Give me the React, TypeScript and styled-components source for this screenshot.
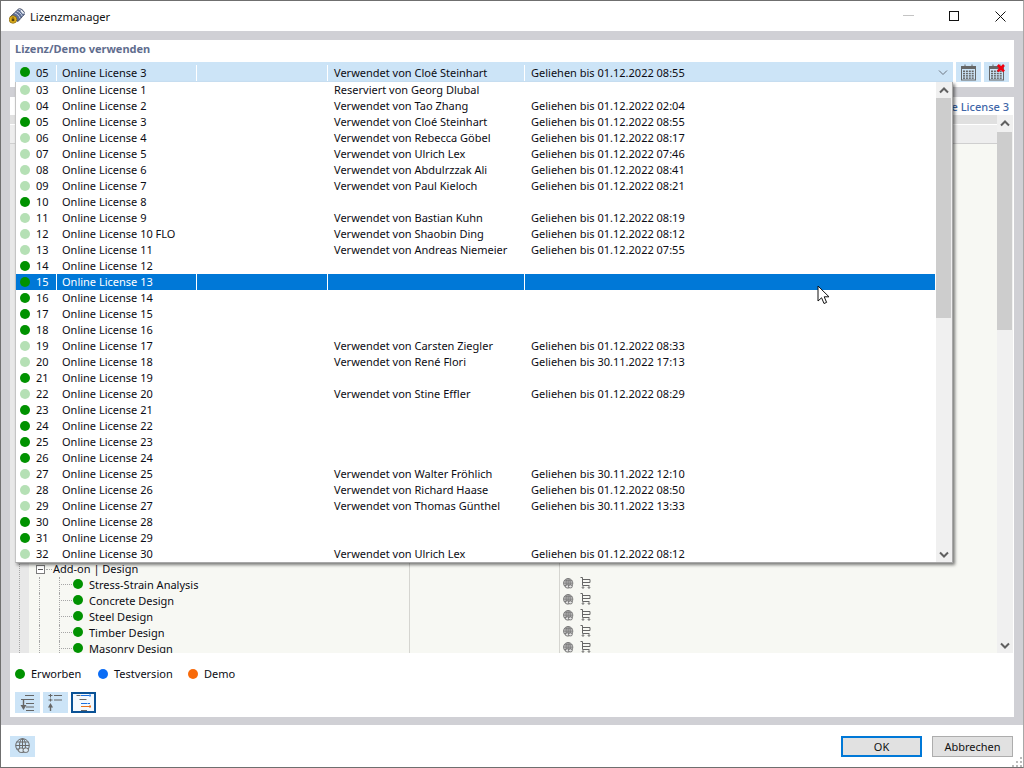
import React from "react";
import styled, { createGlobalStyle } from "styled-components";

const Global = createGlobalStyle`
  html, body { margin: 0; padding: 0; background: #fff; }
  body { font-family: "Noto Sans", "Open Sans", sans-serif; font-size: 11px; color: #0c0c14; }
  * { box-sizing: border-box; }
`;

const Window = styled.div`
  position: relative; width: 1024px; height: 768px; display: flex; flex-direction: column;
  border: 1px solid #6f6f6f; border-right-color: #a8a8a8; background: #fff; overflow: hidden;
`;
const TitleBar = styled.header`
  height: 30px; flex: none; display: flex; align-items: center; padding-left: 8px; font-size: 11.2px; color: #111;
`;
const LogoSlot = styled.div` width: 21px; flex: none; display: flex; align-items: center; `;
const TitleText = styled.span` flex: 1; `;
const WindowControl = styled.div`
  width: 46px; height: 30px; display: flex; align-items: center; justify-content: center;
`;
const Body = styled.main`
  flex: 1; min-height: 0; background: #d0d0d5; padding: 9px 9px 8px; display: flex; flex-direction: column; gap: 10px;
`;
const Panel = styled.section`
  background: #fff; flex: none; display: flex; flex-direction: column;
`;
const TopPanel = styled(Panel)` height: 47px; padding: 0 5px; z-index: 2; `;
const MainPanel = styled(Panel)` height: 620px; `;
const PanelTitle = styled.h2`
  margin: 0; height: 22px; padding-top: 2px; font-size: 11px; line-height: 14px; font-weight: 700; color: #5f6d8e;
`;
const ComboLine = styled.div` display: flex; gap: 3px; height: 20px; `;
const ComboWrap = styled.div` position: relative; width: 938px; flex: none; `;
const Combo = styled.div`
  height: 20px; background: #cce4f7; display: flex; padding: 3px 0 0 1px; align-items: flex-start;
`;
const ComboArrow = styled.div`
  flex: 1; height: 14px; display: flex; align-items: center; justify-content: center; padding-right: 2px;
`;
const ToolButton = styled.button<{ $active?: boolean }>`
  width: 25px; height: 21px; padding: 0; display: flex; align-items: center; justify-content: center;
  background: ${p => (p.$active ? "#f4f9fe" : "#cce4f7")};
  border: ${p => (p.$active ? "2px solid #0a5296" : "0")};
`;
const ComboButton = styled(ToolButton)` height: 20px; `;
const Popup = styled.div`
  position: absolute; left: 0; right: 0; top: 20px; height: 481px; background: #fff; display: flex;
  border-left: 1px solid #c4c4c4; border-right: 1px solid #a8a8a8; border-bottom: 1px solid #a8a8a8;
  box-shadow: 2px 2px 3px rgba(0, 0, 0, 0.5);
`;
const Rows = styled.div` width: 919px; margin-right: 1px; flex: none; `;
const Row = styled.div<{ $selected?: boolean }>`
  height: 16px; display: flex; align-items: center; white-space: nowrap; line-height: 16px;
  background: ${p => (p.$selected ? "#0078d7" : "transparent")};
  color: ${p => (p.$selected ? "#fff" : "#0c0c14")};
`;
const DotCell = styled.div` width: 20px; height: 100%; flex: none; display: flex; align-items: center; padding-left: 4px; `;
const NumCell = styled.div` width: 20px; flex: none; `;
const Cell = styled.div<{ $w: number; $pad: number; $line?: boolean }>`
  width: ${p => p.$w}px; flex: none; height: 100%; padding-left: ${p => p.$pad}px;
  border-left: 1px solid ${p => (p.$line ? "#fff" : "transparent")};
`;
const Dot = styled.span<{ $c: string; $up?: boolean }>`
  display: block; width: 10px; height: 10px; border-radius: 50%; flex: none; background: ${p => p.$c};
  margin-bottom: ${p => (p.$up ? 2 : 0)}px;
`;
const ScrollBar = styled.div`
  width: 16px; flex: none; background: #f0f0f0; display: flex; flex-direction: column;
`;
const ScrollBtn = styled.div<{ $h?: number }>`
  height: ${p => p.$h ?? 16}px; flex: none; display: flex; align-items: center; justify-content: center;
`;
const Thumb = styled.div<{ $h: number }>` height: ${p => p.$h}px; background: #cdcdcd; flex: none; margin-right: 1px; `;
const Track = styled.div` flex: 1; `;
const TabLabel = styled.div`
  height: 18px; text-align: right; padding-right: 5px; font-weight: 500; font-size: 11px; line-height: 20px; color: #3f66a8;
`;
const TableWrap = styled.div` height: 538px; display: flex; padding-right: 1px; flex: none; `;
const Table = styled.div` flex: 1; display: flex; flex-direction: column; min-width: 0; `;
const HeaderOne = styled.div` height: 9px; background: #e0e0e0; flex: none; `;
const HeaderTwo = styled.div` height: 20px; background: #eeeeee; border-top: 1px solid #fff; border-bottom: 1px solid #cfcfcf; flex: none; `;
const TreeBody = styled.div`
  height: 509px; flex: none; overflow: hidden; display: flex; background: #f7f8f3;
`;
const Gutter = styled.div`
  width: 19px; flex: none;
  background: repeating-linear-gradient(to bottom, #a6a6a6 0 1px, transparent 1px 2px) 9px 0 / 1px 100% no-repeat, #e8e8e8;
`;
const NameColumn = styled.div` width: 380px; flex: none; padding-top: 417px; `;
const MidColumn = styled.div` width: 150px; flex: none; border-left: 1px solid #d5d5d0; `;
const IconColumn = styled.div` flex: 1; border-left: 1px solid #d5d5d0; padding-top: 431px; `;
const TreeRow = styled.div`
  height: 16px; display: flex; align-items: center; white-space: nowrap; line-height: 16px;
`;
const GroupRow = styled(TreeRow)` padding-left: 7px; `;
const Expand = styled.span`
  width: 9px; height: 9px; border: 1px solid #7c7c7c; background: #fff; flex: none; position: relative;
  &::after { content: ""; position: absolute; left: 1px; right: 1px; top: 3px; height: 1px; background: #555; }
`;
const HLine = styled.span`
  width: 6px; border-top: 1px dotted #a6a6a6; margin: 0 1px 0 1px; flex: none;
`;
const ChildRow = styled(TreeRow)` padding-left: 10px; `;
const Guide = styled.span<{ $w: number; $branch?: boolean }>`
  width: ${p => p.$w}px; height: 16px; flex: none; border-left: 1px dotted #a6a6a6; position: relative;
  ${p => p.$branch && `&::after { content: ""; position: absolute; left: 1px; right: 1px; top: 7px; border-top: 1px dotted #a6a6a6; }`}
`;
const TreeLabel = styled.span` margin-left: 6px; `;
const IconRow = styled.div` height: 16px; display: flex; align-items: center; gap: 6px; padding-left: 3px; `;
const Legend = styled.div`
  margin-top: 14px; height: 14px; display: flex; align-items: center; padding-left: 5px; line-height: 14px;
`;
const LegendItem = styled.div<{ $w: number }>`
  width: ${p => p.$w}px; display: flex; align-items: center; gap: 6px;
`;
const SortBar = styled.div` margin-top: 11px; display: flex; gap: 3px; padding-left: 5px; `;
const Footer = styled.footer`
  height: 42px; flex: none; display: flex; align-items: center; padding: 0 10px 0 9px; position: relative;
`;
const Spacer = styled.div` flex: 1; `;
const DialogButton = styled.button<{ $primary?: boolean }>`
  width: 81px; height: 21px; margin-left: 10px; padding: 0; font: inherit; font-size: 11px; line-height: 15px; color: #111;
  background: #e1e1e1; border: ${p => (p.$primary ? "2px solid #0078d7" : "1px solid #adadad")};
`;
const Actions = styled.div` display: flex; `;
const Grip = styled.div`
  position: absolute; right: 0; bottom: 0; width: 11px; height: 11px;
`;
const Cursor = styled.svg`
  position: absolute; left: 816px; top: 284px; z-index: 5;
`;

const GREEN = "#009200";
const PALE = "#b5e0b5";

type Lic = [string, string, string, string, boolean];
const licenses: Lic[] = [
  ["03", "Online License 1", "Reserviert von Georg Dlubal", "", false],
  ["04", "Online License 2", "Verwendet von Tao Zhang", "Geliehen bis 01.12.2022 02:04", false],
  ["05", "Online License 3", "Verwendet von Cloé Steinhart", "Geliehen bis 01.12.2022 08:55", true],
  ["06", "Online License 4", "Verwendet von Rebecca Göbel", "Geliehen bis 01.12.2022 08:17", false],
  ["07", "Online License 5", "Verwendet von Ulrich Lex", "Geliehen bis 01.12.2022 07:46", false],
  ["08", "Online License 6", "Verwendet von Abdulrzzak Ali", "Geliehen bis 01.12.2022 08:41", false],
  ["09", "Online License 7", "Verwendet von Paul Kieloch", "Geliehen bis 01.12.2022 08:21", false],
  ["10", "Online License 8", "", "", true],
  ["11", "Online License 9", "Verwendet von Bastian Kuhn", "Geliehen bis 01.12.2022 08:19", false],
  ["12", "Online License 10 FLO", "Verwendet von Shaobin Ding", "Geliehen bis 01.12.2022 08:12", false],
  ["13", "Online License 11", "Verwendet von Andreas Niemeier", "Geliehen bis 01.12.2022 07:55", false],
  ["14", "Online License 12", "", "", true],
  ["15", "Online License 13", "", "", true],
  ["16", "Online License 14", "", "", true],
  ["17", "Online License 15", "", "", true],
  ["18", "Online License 16", "", "", true],
  ["19", "Online License 17", "Verwendet von Carsten Ziegler", "Geliehen bis 01.12.2022 08:33", false],
  ["20", "Online License 18", "Verwendet von René Flori", "Geliehen bis 30.11.2022 17:13", false],
  ["21", "Online License 19", "", "", true],
  ["22", "Online License 20", "Verwendet von Stine Effler", "Geliehen bis 01.12.2022 08:29", false],
  ["23", "Online License 21", "", "", true],
  ["24", "Online License 22", "", "", true],
  ["25", "Online License 23", "", "", true],
  ["26", "Online License 24", "", "", true],
  ["27", "Online License 25", "Verwendet von Walter Fröhlich", "Geliehen bis 30.11.2022 12:10", false],
  ["28", "Online License 26", "Verwendet von Richard Haase", "Geliehen bis 01.12.2022 08:50", false],
  ["29", "Online License 27", "Verwendet von Thomas Günthel", "Geliehen bis 30.11.2022 13:33", false],
  ["30", "Online License 28", "", "", true],
  ["31", "Online License 29", "", "", true],
  ["32", "Online License 30", "Verwendet von Ulrich Lex", "Geliehen bis 01.12.2022 08:12", false],
];

const addons = ["Stress-Strain Analysis", "Concrete Design", "Steel Design", "Timber Design", "Masonry Design"];

const LicenseCells = ({ lic, line, up }: { lic: Lic; line?: boolean; up?: boolean }) => (
  <>
    <DotCell><Dot $c={lic[4] ? GREEN : PALE} $up={up} /></DotCell>
    <NumCell>{lic[0]}</NumCell>
    <Cell $w={140} $pad={5} $line={line}>{lic[1]}</Cell>
    <Cell $w={131} $pad={0} $line={line} />
    <Cell $w={197} $pad={6} $line={line}>{lic[2]}</Cell>
    <Cell $w={411} $pad={6} $line={line}>{lic[3]}</Cell>
  </>
);

const Chevron = ({ up, light }: { up?: boolean; light?: boolean }) => (
  <svg width="10" height="7" viewBox="0 0 10 7">
    <path d={up ? "M1 5.5 5 1.5 9 5.5" : "M1 1.5 5 5.5 9 1.5"} fill="none" stroke={light ? "#6c7480" : "#606060"} strokeWidth={light ? 1 : 2} />
  </svg>
);

const Calendar = ({ cross }: { cross?: boolean }) => (
  <svg width="16" height="17" viewBox="0 0 16 17">
    <g fill="none" stroke="#666" strokeWidth="1">
      <rect x="0.5" y="2.5" width="14" height="13.5" />
      <path d="M4 0.5v3M11 0.5v3" />
    </g>
    <rect x="1" y="3" width="13" height="2" fill="#666" />
    <g fill="#666">
      {[0, 1, 2, 3].flatMap(r => [0, 1, 2, 3].map(c => (
        <rect key={`${r}${c}`} x={2 + c * 2.9} y={6.5 + r * 2.3} width="2" height="1.5" />
      )))}
    </g>
    {cross && <path d="M8.8 1 15 7.4M15 1 8.8 7.4" stroke="#f00010" strokeWidth="2.6" fill="none" />}
  </svg>
);

const SortDown = () => (
  <svg width="15" height="17" viewBox="0 0 15 17">
    <path d="M5 1.5h9M1 5.5h13M6 9.5h8M6 13h8M6 16.5h8" stroke="#666" fill="none" />
    <path d="M3.5 6v6" stroke="#666" strokeWidth="1.4" />
    <path d="M0.5 11h6L3.5 16z" fill="#666" />
  </svg>
);
const SortUp = () => (
  <svg width="15" height="17" viewBox="0 0 15 17">
    <path d="M6 1.5h8M6 6h8M0.5 1.5h4M0.5 6h4" stroke="#666" fill="none" />
    <path d="M2.5 0v3.5M2.5 4.5v3" stroke="#666" fill="none" />
    <path d="M2.5 9 0 13.5h5z" fill="#666" />
    <path d="M2.5 13v4" stroke="#666" strokeWidth="1.4" />
  </svg>
);
const SortLegend = () => (
  <svg width="15" height="17" viewBox="0 0 15 17">
    <path d="M0.5 1.5h4M3.5 5.5h7M5 16.5h6" stroke="#666" fill="none" />
    <path d="M5 1.5h8M5 9.5h6M11.5 9.5h2.5" stroke="#1a6fe0" fill="none" />
    <path d="M5 12.5h8" stroke="#e8701a" fill="none" />
    <rect x="13" y="0.5" width="2" height="2" fill="#3c8ce8" />
    <rect x="13" y="11.5" width="2" height="2" fill="#e8701a" />
  </svg>
);
const Globe = ({ size = 16, heavy }: { size?: number; heavy?: boolean }) => (
  <svg width={size} height={size} viewBox="0 0 16 16">
    <g fill={heavy ? "#c4c4c4" : "none"} stroke={heavy ? "#767676" : "#6a6a6a"} strokeWidth={heavy ? 1.2 : 1}>
      <circle cx="7.5" cy="7.5" r="6.8" />
      <ellipse cx="7.5" cy="7.5" rx="3" ry="6.8" />
      <path d="M7.5 0.7v13.6M0.7 7.5h13.6M1.6 4h11.8M1.6 11h11.8" />
    </g>
    <g fill={heavy ? "#e4e4e4" : "#ddeaf4"} stroke="#6a6a6a" strokeWidth={heavy ? 1.2 : 1}>
      <rect x="3.5" y="10" width="5.5" height="4.4" rx="2.2" />
      <rect x="8" y="10" width="5.5" height="4.4" rx="2.2" />
    </g>
  </svg>
);
const Cart = () => (
  <svg width="11" height="12" viewBox="0 0 11 12">
    <g fill="none" stroke="#666" strokeWidth="1">
      <path d="M0.5 0.5H2.5V8.5H9.5" />
      <path d="M2.5 2.5H10V5.5H2.5" />
      <circle cx="3" cy="10.5" r="0.8" />
      <circle cx="9" cy="10.5" r="0.8" />
    </g>
  </svg>
);
const AppLogo = () => (
  <svg width="16" height="16" viewBox="0 0 16 16">
    <path d="M1.5 8.5 9.5 1c2.2-1 6 1.6 6 5.2L9 13.5z" fill="#5f6f94" stroke="#333b50" strokeWidth="0.8" />
    <path d="M9.5 1c2.6.8 5.2 3 6 5.2M7.5 2.9c2.4.8 5 3 5.8 5.4M5.5 4.8c2.4.8 4.8 3 5.6 5.6" stroke="#cfd8e8" strokeWidth="1" fill="none" />
    <path d="M12 2.5l2.5 3" stroke="#eef2f8" strokeWidth="1.6" />
    <circle cx="4" cy="11.5" r="3.8" fill="#e3b21e" stroke="#7d6210" strokeWidth="0.7" />
    <rect x="2.7" y="11" width="2.6" height="2.2" fill="#5a4508" />
    <path d="M3.2 11V9.8h1.6V11" stroke="#5a4508" fill="none" strokeWidth="0.7" />
  </svg>
);

export default function App() {
  return (
    <>
      <Global />
      <Window>
        <TitleBar>
          <LogoSlot><AppLogo /></LogoSlot>
          <TitleText>Lizenzmanager</TitleText>
          <WindowControl>
            <svg width="11" height="2" viewBox="0 0 11 2"><path d="M0 .5h11" stroke="#c4c4c4" /></svg>
          </WindowControl>
          <WindowControl>
            <svg width="11" height="11" viewBox="0 0 11 11"><rect x=".5" y=".5" width="9" height="9" fill="none" stroke="#111" /></svg>
          </WindowControl>
          <WindowControl>
            <svg width="11" height="11" viewBox="0 0 11 11"><path d="M.5.5l10 10M10.5.5l-10 10" stroke="#111" fill="none" /></svg>
          </WindowControl>
        </TitleBar>
        <Body>
          <TopPanel>
            <PanelTitle>Lizenz/Demo verwenden</PanelTitle>
            <ComboLine>
              <ComboWrap>
                <Combo>
                  <Row>
                    <LicenseCells lic={licenses[2]} line up />
                  </Row>
                  <ComboArrow><Chevron light /></ComboArrow>
                </Combo>
                <Popup>
                  <Rows>
                    {licenses.map(l => (
                      <Row key={l[0]} $selected={l[0] === "15"}>
                        <LicenseCells lic={l} line={l[0] === "15"} />
                      </Row>
                    ))}
                  </Rows>
                  <ScrollBar>
                    <ScrollBtn><Chevron up /></ScrollBtn>
                    <Thumb $h={220} />
                    <Track />
                    <ScrollBtn><Chevron /></ScrollBtn>
                  </ScrollBar>
                </Popup>
              </ComboWrap>
              <ComboButton><Calendar /></ComboButton>
              <ComboButton><Calendar cross /></ComboButton>
            </ComboLine>
          </TopPanel>
          <MainPanel>
            <TabLabel>Online License 3</TabLabel>
            <TableWrap>
              <Table>
                <HeaderOne />
                <HeaderTwo />
                <TreeBody>
                  <Gutter />
                  <NameColumn>
                    <GroupRow>
                      <Expand />
                      <HLine />
                      <span>Add-on | Design</span>
                    </GroupRow>
                    {addons.map(a => (
                      <ChildRow key={a}>
                        <Guide $w={20} />
                        <Guide $w={14} $branch />
                        <Dot $c={GREEN} $up />
                        <TreeLabel>{a}</TreeLabel>
                      </ChildRow>
                    ))}
                  </NameColumn>
                  <MidColumn />
                  <IconColumn>
                    {addons.map(a => (
                      <IconRow key={a}><Globe size={11} heavy /><Cart /></IconRow>
                    ))}
                  </IconColumn>
                </TreeBody>
              </Table>
              <ScrollBar>
                <ScrollBtn $h={17}><Chevron up /></ScrollBtn>
                <Thumb $h={198} />
                <Track />
                <ScrollBtn><Chevron /></ScrollBtn>
              </ScrollBar>
            </TableWrap>
            <Legend>
              <LegendItem $w={83}><Dot $c={GREEN} />Erworben</LegendItem>
              <LegendItem $w={90}><Dot $c="#0a6cf5" />Testversion</LegendItem>
              <LegendItem $w={60}><Dot $c="#f86a0a" />Demo</LegendItem>
            </Legend>
            <SortBar>
              <ToolButton><SortDown /></ToolButton>
              <ToolButton><SortUp /></ToolButton>
              <ToolButton $active><SortLegend /></ToolButton>
            </SortBar>
          </MainPanel>
        </Body>
        <Footer>
          <ToolButton><Globe /></ToolButton>
          <Spacer />
          <Actions>
            <DialogButton $primary>OK</DialogButton>
            <DialogButton>Abbrechen</DialogButton>
          </Actions>
          <Grip>
            <svg width="11" height="11" viewBox="0 0 11 11" fill="#bbb">
              <rect x="8" y="0" width="2" height="2" />
              <rect x="4" y="4" width="2" height="2" /><rect x="8" y="4" width="2" height="2" />
              <rect x="0" y="8" width="2" height="2" /><rect x="4" y="8" width="2" height="2" /><rect x="8" y="8" width="2" height="2" />
            </svg>
          </Grip>
        </Footer>
        <Cursor width="14" height="21" viewBox="0 0 14 21">
          <path d="M1 1V16L4.6 12.8 7 18.5 9.6 17.4 7.2 11.8H12z" fill="#fff" stroke="#111" strokeWidth="1" />
        </Cursor>
      </Window>
    </>
  );
}
